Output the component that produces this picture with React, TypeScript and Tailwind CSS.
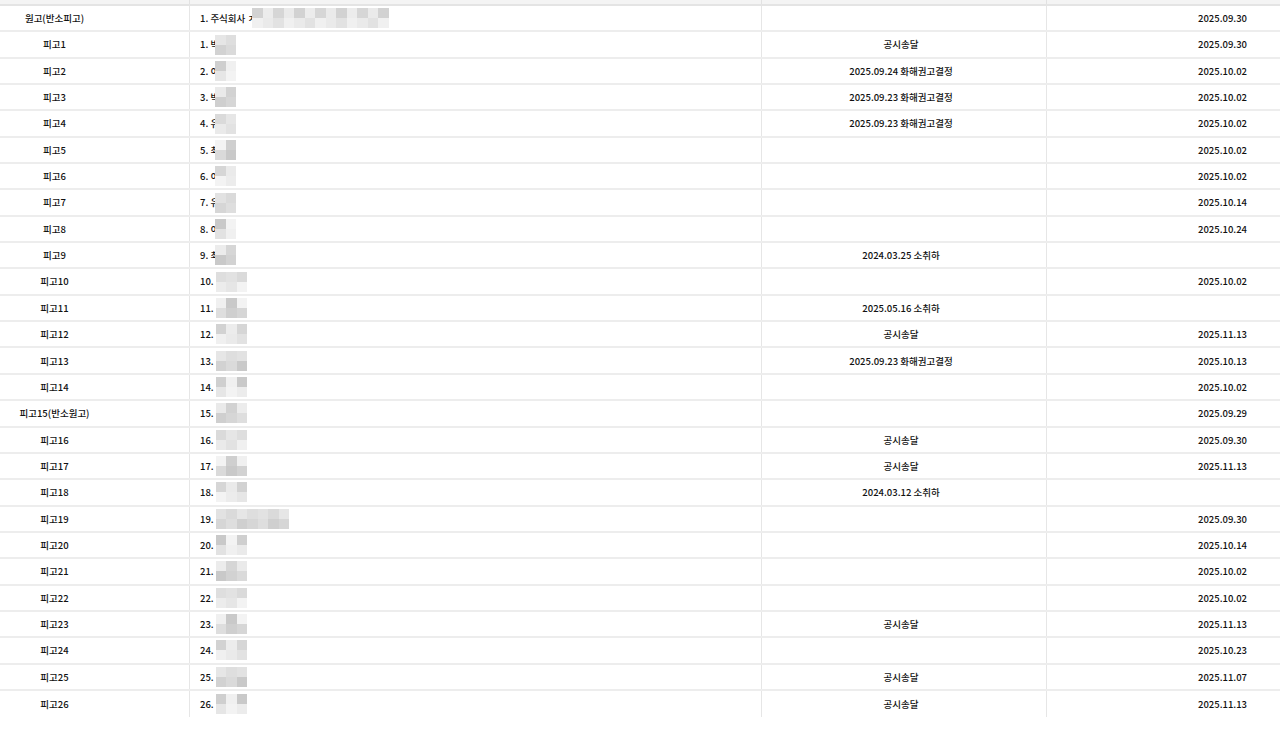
import React from "react";

type Row = { a: string; num: string; ch: string; mosaic: "short" | "mid" | "wide" | "corp" | "long"; c: string; d: string };

const rows: Row[] = [
  { a: "원고(반소피고)", num: "1. 주식회사", ch: "ㅈ", mosaic: "corp", c: "", d: "2025.09.30" },
  { a: "피고1", num: "1.", ch: "박", mosaic: "short", c: "공시송달", d: "2025.09.30" },
  { a: "피고2", num: "2.", ch: "이", mosaic: "short", c: "2025.09.24 화해권고결정", d: "2025.10.02" },
  { a: "피고3", num: "3.", ch: "박", mosaic: "short", c: "2025.09.23 화해권고결정", d: "2025.10.02" },
  { a: "피고4", num: "4.", ch: "유", mosaic: "short", c: "2025.09.23 화해권고결정", d: "2025.10.02" },
  { a: "피고5", num: "5.", ch: "최", mosaic: "short", c: "", d: "2025.10.02" },
  { a: "피고6", num: "6.", ch: "이", mosaic: "short", c: "", d: "2025.10.02" },
  { a: "피고7", num: "7.", ch: "유", mosaic: "short", c: "", d: "2025.10.14" },
  { a: "피고8", num: "8.", ch: "이", mosaic: "short", c: "", d: "2025.10.24" },
  { a: "피고9", num: "9.", ch: "최", mosaic: "short", c: "2024.03.25 소취하", d: "" },
  { a: "피고10", num: "10.", ch: "", mosaic: "mid", c: "", d: "2025.10.02" },
  { a: "피고11", num: "11.", ch: "", mosaic: "mid", c: "2025.05.16 소취하", d: "" },
  { a: "피고12", num: "12.", ch: "", mosaic: "mid", c: "공시송달", d: "2025.11.13" },
  { a: "피고13", num: "13.", ch: "", mosaic: "mid", c: "2025.09.23 화해권고결정", d: "2025.10.13" },
  { a: "피고14", num: "14.", ch: "", mosaic: "mid", c: "", d: "2025.10.02" },
  { a: "피고15(반소원고)", num: "15.", ch: "", mosaic: "mid", c: "", d: "2025.09.29" },
  { a: "피고16", num: "16.", ch: "", mosaic: "mid", c: "공시송달", d: "2025.09.30" },
  { a: "피고17", num: "17.", ch: "", mosaic: "mid", c: "공시송달", d: "2025.11.13" },
  { a: "피고18", num: "18.", ch: "", mosaic: "mid", c: "2024.03.12 소취하", d: "" },
  { a: "피고19", num: "19.", ch: "", mosaic: "long", c: "", d: "2025.09.30" },
  { a: "피고20", num: "20.", ch: "", mosaic: "mid", c: "", d: "2025.10.14" },
  { a: "피고21", num: "21.", ch: "", mosaic: "mid", c: "", d: "2025.10.02" },
  { a: "피고22", num: "22.", ch: "", mosaic: "mid", c: "", d: "2025.10.02" },
  { a: "피고23", num: "23.", ch: "", mosaic: "mid", c: "공시송달", d: "2025.11.13" },
  { a: "피고24", num: "24.", ch: "", mosaic: "mid", c: "", d: "2025.10.23" },
  { a: "피고25", num: "25.", ch: "", mosaic: "mid", c: "공시송달", d: "2025.11.07" },
  { a: "피고26", num: "26.", ch: "", mosaic: "mid", c: "공시송달", d: "2025.11.13" },
];

const shades = ["#d2d2d2", "#e2e2e2", "#cfcfcf", "#ececec", "#dadada", "#f0f0f0", "#d6d6d6", "#e6e6e6", "#c9c9c9", "#eaeaea", "#dedede", "#f3f3f3"];

function Mosaic({ cols, seed }: { cols: number; seed: number }) {
  const cells: string[] = [];
  for (let r = 0; r < 2; r++) {
    for (let c = 0; c < cols; c++) {
      cells.push(shades[(seed * 7 + r * 5 + c * 3 + r * c) % shades.length]);
    }
  }
  return (
    <div className="grid" style={{ gridTemplateColumns: `repeat(${cols}, 10.5px)`, gridTemplateRows: "repeat(2, 10px)" }}>
      {cells.map((col, i) => (
        <div key={i} style={{ background: col }} />
      ))}
    </div>
  );
}

export default function App() {
  return (
    <div
      className="w-[1280px] h-[749px] bg-white text-[#111] text-[9.5px] font-medium overflow-hidden"
      style={{ fontFamily: '"Noto Sans CJK KR", "Noto Sans", sans-serif' }}
    >
      <div className="flex h-[6px] bg-[#f4f4f4] border-b-2 border-[#e4e4e4]">
        <div className="w-[190px] border-r border-[#e2e2e2]" />
        <div className="w-[572px] border-r border-[#e2e2e2]" />
        <div className="w-[285px] border-r border-[#e2e2e2]" />
        <div className="flex-1" />
      </div>
      {rows.map((r, i) => (
        <div
          key={i}
          className={
            i === rows.length - 1
              ? "flex h-[26.35px] items-stretch"
              : "flex h-[26.35px] border-b-2 border-[#ededed] items-stretch"
          }
        >
          <div className="w-[190px] border-r border-[#e6e6e6] flex items-center justify-center pr-[80px]">{r.a}</div>
          <div className="w-[572px] border-r border-[#e6e6e6] flex items-center pl-[10px]">
            <span className="whitespace-pre">{r.num} </span>
            {r.ch && <span className="w-[5px] overflow-hidden inline-block">{r.ch}</span>}
            <div>
              <Mosaic
                seed={i}
                cols={r.mosaic === "corp" ? 13 : r.mosaic === "short" ? 2 : r.mosaic === "long" ? 7 : 3}
              />
            </div>
          </div>
          <div className="w-[285px] border-r border-[#e6e6e6] flex items-center justify-center pr-[6px]">{r.c}</div>
          <div className="flex-1 flex items-center justify-end pr-[33px]">{r.d}</div>
        </div>
      ))}
    </div>
  );
}
